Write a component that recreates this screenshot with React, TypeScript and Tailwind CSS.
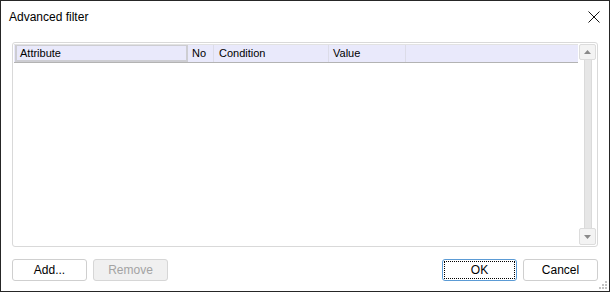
import React from 'react'

function Arrow({ up }: { up?: boolean }) {
  return (
    <svg width="7" height="4" viewBox="0 0 7 4" className="block">
      {up ? <path d="M0 4 L3.5 0 L7 4 Z" fill="#8a8a8a" /> : <path d="M0 0 L3.5 4 L7 0 Z" fill="#8a8a8a" />}
    </svg>
  )
}

function Grip() {
  const dots = [
    [6, 0],
    [3, 3], [6, 3],
    [0, 6], [3, 6], [6, 6],
  ]
  return (
    <svg width="8" height="8" viewBox="0 0 8 8">
      {dots.map(([x, y], i) => (
        <rect key={i} x={x} y={y} width="2" height="2" fill="#c2c2c2" />
      ))}
    </svg>
  )
}

export default function App() {
  return (
    <div
      className="relative w-[610px] h-[292px] bg-white border border-[#262626] flex flex-col text-black"
      style={{ fontFamily: '"Liberation Sans", Arial, sans-serif' }}
    >
      <div className="h-[41px] flex items-start justify-between pl-[8px] pr-[9px] pt-[8px]">
        <span className="text-[12px] leading-[16px]">Advanced filter</span>
        <svg width="12" height="12" viewBox="0 0 12 12" className="mt-[2px]">
          <path d="M0.5 0.5 L11.5 11.5 M11.5 0.5 L0.5 11.5" stroke="#111" strokeWidth="1" />
        </svg>
      </div>

      <div className="mx-[11px] h-[205px] border border-[#d9d9d9] rounded-[3px] flex p-[1px]">
        <div className="flex-1 flex flex-col">
          <div className="h-[19px] flex text-[11px] leading-[15px] bg-[#e9e9fb] border-t border-[#e2e2e2] border-b border-b-[#b3b3b3]">
            <div className="w-[173px] ml-[1px] border-2 border-t border-[#cdcdd2] pl-[3px]">Attribute</div>
            <div className="w-[26px] border-r border-[#dcdce8] pl-[4px] pt-[1px]">No</div>
            <div className="w-[115px] border-r border-[#dcdce8] pl-[5px] pt-[1px]">Condition</div>
            <div className="w-[77px] border-r border-[#dcdce8] pl-[4px] pt-[1px]">Value</div>
            <div className="flex-1" />
          </div>
          <div className="flex-1" />
        </div>
        <div className="w-[17px] ml-[1px] flex flex-col items-center">
          <div className="w-[17px] h-[16px] border border-[#dcdcdc] rounded-[2px] bg-[#f3f3f3] flex items-center justify-center">
            <Arrow up />
          </div>
          <div className="flex-1 w-[8px] bg-[#e6e6e6] border-x border-[#dadada]" />
          <div className="w-[17px] h-[17px] border border-[#dcdcdc] rounded-[2px] bg-[#f3f3f3] flex items-center justify-center">
            <Arrow />
          </div>
        </div>
      </div>

      <div className="mt-[12px] mx-[11px] flex items-start text-[12px]">
        <button className="w-[75px] h-[22px] border border-[#cfcfcf] rounded-[3px] bg-white leading-[20px]">
          Add...
        </button>
        <button className="ml-[6px] w-[75px] h-[22px] border border-[#d6d6d6] rounded-[3px] bg-[#f0f0f0] text-[#a3a3a3] leading-[20px]">
          Remove
        </button>
        <div className="flex-1" />
        <button className="w-[75px] h-[22px] border border-[#5b9bd5] rounded-[3px] bg-white p-[1px]">
          <span className="block w-full h-full border border-dotted border-black leading-[16px]">OK</span>
        </button>
        <button className="ml-[6px] w-[75px] h-[22px] border border-[#cfcfcf] rounded-[3px] bg-white leading-[20px]">
          Cancel
        </button>
      </div>

      <div className="absolute right-[2px] bottom-[2px] leading-none">
        <Grip />
      </div>
    </div>
  )
}
